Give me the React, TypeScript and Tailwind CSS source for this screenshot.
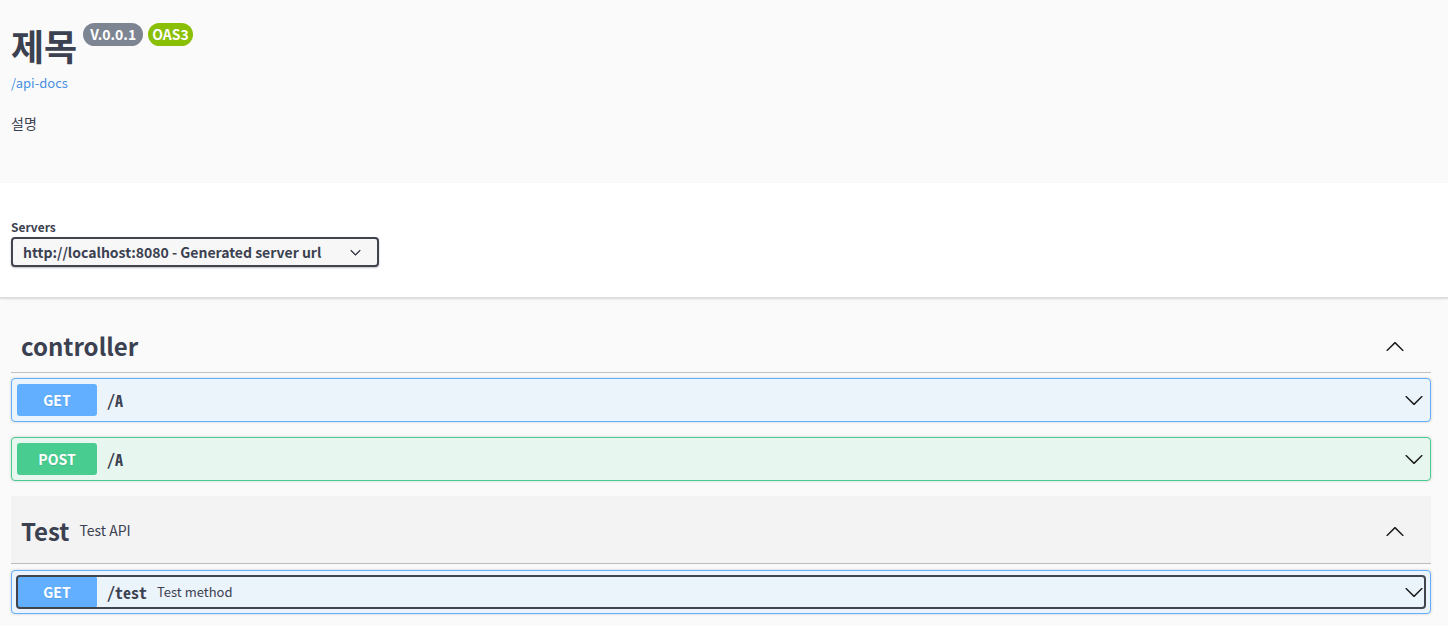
const SANS = "font-['Noto_Sans_CJK_KR','Noto_Sans',sans-serif]";
const MONO = "font-['Noto_Sans_Mono_CJK_KR','DejaVu_Sans_Mono',monospace]";

function ArrowDown({ className = "" }: { className?: string }) {
  return (
    <svg viewBox="0 0 20 20" width="20" height="20" className={className} fill="currentColor">
      <path d="M17.418 6.109c.272-.268.709-.268.979 0s.271.701 0 .969l-7.908 7.83c-.27.268-.707.268-.979 0l-7.908-7.83c-.27-.268-.27-.701 0-.969.271-.268.709-.268.979 0L10 13.25l7.418-7.141z" />
    </svg>
  );
}

function ArrowUp({ className = "" }: { className?: string }) {
  return (
    <svg viewBox="0 0 20 20" width="20" height="20" className={className} fill="currentColor">
      <path d="M17.418 14.908c.272.268.709.268.979 0s.271-.701 0-.969l-7.908-7.83c-.27-.268-.707-.268-.979 0l-7.908 7.83c-.27.268-.27.701 0 .969.271.268.709.268.979 0L10 7.767l7.418 7.141z" />
    </svg>
  );
}

type Op = {
  method: string;
  path: string;
  desc?: string;
  focused?: boolean;
};

const styles: Record<string, { border: string; bg: string; badge: string }> = {
  GET: { border: "border-[#61affe]", bg: "bg-[#ebf3fb]", badge: "bg-[#61affe]" },
  POST: { border: "border-[#49cc90]", bg: "bg-[#e8f6f0]", badge: "bg-[#49cc90]" },
};

function Operation({ op }: { op: Op }) {
  const s = styles[op.method];
  return (
    <div className={`mb-[15px] rounded-[4px] border ${s.border} ${s.bg} p-[5px] shadow-[0_0_3px_rgba(0,0,0,0.19)]`}>
      <div
        className={`flex h-[32px] items-center rounded-[3px] ${
          op.focused ? "outline-2 -outline-offset-1 outline-[#41444e]" : ""
        }`}
      >
        <span
          className={`flex h-[32px] w-[80px] shrink-0 items-center justify-center rounded-[3px] ${s.badge} text-[14px] font-bold text-white [text-shadow:0_1px_0_rgba(0,0,0,0.1)]`}
        >
          {op.method}
        </span>
        <span className={`${MONO} px-[10px] text-[16px] font-bold text-[#3b4151]`}>{op.path}</span>
        {op.desc && <span className="text-[13px] text-[#3b4151]">{op.desc}</span>}
        <ArrowDown className="ml-auto mr-[1px] text-[#1b1b1b]" />
      </div>
    </div>
  );
}

function TagHeader({
  name,
  desc,
  shaded,
  height,
}: {
  name: string;
  desc?: string;
  shaded?: boolean;
  height: string;
}) {
  return (
    <div
      className={`mb-[5px] flex ${height} items-center border-b border-[rgba(59,65,81,0.3)] pl-[10px] pr-[26px] ${
        shaded ? "bg-[#f3f3f3] pt-[2px]" : ""
      }`}
    >
      <span className="text-[24px] font-bold text-[#3b4151]">{name}</span>
      {desc && <span className="ml-[10px] text-[14px] text-[#3b4151]">{desc}</span>}
      <ArrowUp className="ml-auto text-[#1b1b1b]" />
    </div>
  );
}

export default function App() {
  return (
    <div className={`${SANS} min-h-screen bg-[#fafafa] text-[#3b4151]`}>
      <section className="h-[183px] px-[11px] pt-[18px]">
        <div className="flex items-start">
          <h1 className="text-[36px] font-bold leading-[54px]">제목</h1>
          <span className="ml-[6px] mt-[5px] rounded-full bg-[#7d8492] px-[7px] text-[14px] font-bold leading-[23px] text-white">
            V.0.0.1
          </span>
          <span className="ml-[5px] mt-[5px] rounded-full bg-[#89bf04] px-[4px] text-[14px] font-bold leading-[23px] text-white">
            OAS3
          </span>
        </div>
        <a className="mt-[1px] block text-[13px] leading-[20px] text-[#4990e2]">/api-docs</a>
        <p className="mt-[20px] text-[14px]">설명</p>
      </section>

      <section className="h-[115px] border-b border-[#dcdcdc] bg-white px-[11px] pt-[35px] shadow-[0_1px_2px_0_rgba(0,0,0,0.15)]">
        <div className="text-[12px] font-bold leading-[18px]">Servers</div>
        <div className="mt-[1px] flex h-[30px] w-[368px] items-center rounded-[4px] border-2 border-[#41444e] bg-[#f7f7f7] pl-[10px] pr-[16px] shadow-[0_1px_2px_0_rgba(0,0,0,0.25)]">
          <span className="text-[14px] font-bold">http://localhost:8080 - Generated server url</span>
          <svg viewBox="0 0 20 20" width="11" height="11" className="ml-auto" fill="#3b4151">
            <path d="M17.418 6.109c.272-.268.709-.268.979 0s.271.701 0 .969l-7.908 7.83c-.27.268-.707.268-.979 0l-7.908-7.83c-.27-.268-.27-.701 0-.969.271-.268.709-.268.979 0L10 13.25l7.418-7.141z" stroke="#3b4151" strokeWidth="1.5" />
          </svg>
        </div>
      </section>

      <main className="pl-[11px] pr-[17px] pt-[21px]">
        <div className="mb-[15px]">
          <TagHeader name="controller" height="h-[54px]" />
          <Operation op={{ method: "GET", path: "/A" }} />
          <Operation op={{ method: "POST", path: "/A" }} />
        </div>
        <div>
          <TagHeader name="Test" desc="Test API" shaded height="h-[68px]" />
          <div className="pt-[1px]">
            <Operation op={{ method: "GET", path: "/test", desc: "Test method", focused: true }} />
          </div>
        </div>
      </main>
    </div>
  );
}
